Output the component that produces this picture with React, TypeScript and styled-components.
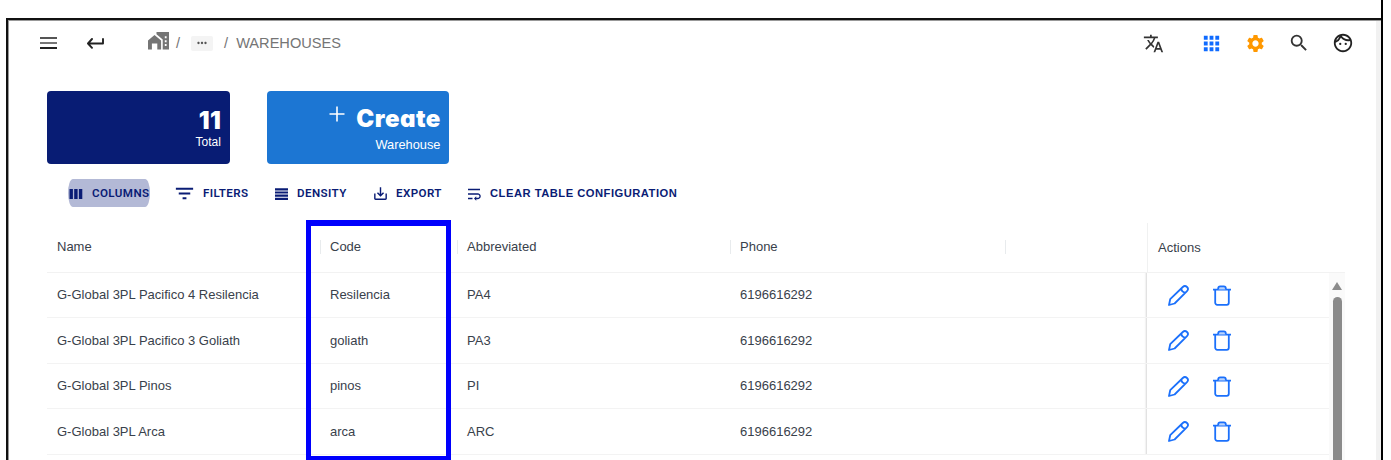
import React from 'react';
import styled, { createGlobalStyle } from 'styled-components';
import {
  MdApps, MdMoreHoriz, MdOutlineFace, MdSaveAlt, MdSearch, MdSettings,
  MdTranslate, MdWrapText, MdFilterList,
} from 'react-icons/md';

const GlobalStyle = createGlobalStyle`
  * { box-sizing: border-box; }
  body { margin: 0; background: #fff; overflow: hidden; font-family: "Liberation Sans", Arial, sans-serif; }
  svg { display: block; flex: none; }
`;

const Page = styled.div`
  width: 1383px;
  height: 460px;
  padding: 18px 0 0 6px;
  border-right: 2px solid #000;
  overflow: hidden;
`;

const Frame = styled.div`
  position: relative;
  display: flex;
  height: 442px;
  border: solid #111;
  border-width: 2px 0 0 2px;
  box-shadow: inset 1px 1px #999;
`;

const Main = styled.main`
  flex: 1;
  padding-left: 40px;
`;

const PageEdge = styled.div`
  width: 5px;
  margin-top: 1px;
  background: #f1f1f1;
`;

const TopBar = styled.header`
  display: flex;
  align-items: center;
  height: 46px;
  margin-left: -8px;
`;

const IconSlot = styled.span<{ $gap?: number; $color?: string; $up?: number }>`
  display: flex;
  margin-left: ${p => p.$gap ?? 0}px;
  margin-bottom: ${p => p.$up ?? 0}px;
  color: ${p => p.$color ?? '#333'};
`;

const Crumbs = styled.nav`
  display: flex;
  align-items: center;
  margin-left: 43px;
  font-size: 14.6px;
  line-height: 18px;
  color: #757575;
`;

const Slash = styled.span<{ $left: number; $right: number }>`
  margin: 0 ${p => p.$right}px 0 ${p => p.$left}px;
`;

const Ellipsis = styled.span`
  display: flex;
  align-items: center;
  justify-content: center;
  width: 22px;
  height: 15px;
  border-radius: 2px;
  background: #f4f4f4;
  color: #555;
`;

const Tools = styled.div`
  display: flex;
  align-items: center;
  margin-left: auto;
  margin-right: 22px;
`;

const Cards = styled.section`
  display: flex;
  gap: 37px;
  margin-top: 25px;
  margin-left: -0.6px;
`;

const Card = styled.div<{ $bg: string; $top: number }>`
  display: flex;
  flex-direction: column;
  align-items: flex-end;
  width: 182.5px;
  height: 73px;
  padding: ${p => p.$top}px 9px 0;
  border-radius: 4px;
  background: ${p => p.$bg};
  color: #fff;
`;

const CardValue = styled.div`
  display: flex;
  height: 26px;
  font: 900 24px/28px Inter, sans-serif;
  font-feature-settings: "cv11";
  letter-spacing: 0.5px;
  margin-right: -0.5px;
`;

const CardLabel = styled.div<{ $size: number; $top: number }>`
  margin-top: ${p => p.$top}px;
  font-size: ${p => p.$size}px;
  line-height: 16px;
`;

const Toolbar = styled.div`
  display: flex;
  height: 28px;
  margin: 15px 0 0 20px;
`;

const ToolButton = styled.button<{ $width: number; $active?: boolean; $sans?: boolean }>`
  display: flex;
  align-items: center;
  width: ${p => p.$width}px;
  height: 28px;
  padding: ${p => (p.$sans ? '1px' : '0')} 0 1px 1px;
  border: 0;
  border-radius: ${p => (p.$active ? '5px / 14px' : '0')};
  background: ${p => (p.$active ? '#b3b9d6' : 'transparent')};
  color: #0a1c75;
  font: ${p => (p.$sans ? '700 11.2px/16px "Liberation Sans", Arial' : '600 11.6px/16px Roboto')}, sans-serif;
  letter-spacing: ${p => (p.$sans ? 0.5 : 0.4)}px;
  white-space: nowrap;
`;

const ToolIcon = styled.span<{ $width: number; $gap: number }>`
  display: flex;
  justify-content: center;
  width: ${p => p.$width}px;
  margin-right: ${p => p.$gap}px;
  padding-top: 2px;
`;

const ToolGap = styled.span<{ $width: number }>`
  width: ${p => p.$width}px;
`;

const Table = styled.section`
  width: 1298px;
  margin-top: 13px;
  margin-left: -1px;
  font-size: 13px;
  line-height: 16px;
  color: #39414b;
`;

const columns = '273px 137px 273px 275px 142px 1fr';

const HeadRow = styled.div`
  display: grid;
  grid-template-columns: ${columns};
  align-items: center;
  height: 52.5px;
  border-bottom: 1px solid #f2f2f2;
`;

const HeadCell = styled.div<{ $line?: boolean }>`
  display: flex;
  align-items: center;
  height: 14px;
  margin-top: 2px;
  padding-left: 9px;
  border-left: 1px solid ${p => (p.$line ? '#e8ebed' : 'transparent')};
`;

const HeadActions = styled.div`
  display: flex;
  align-items: center;
  height: 49px;
  margin-top: 3px;
  padding-left: 10px;
  border-left: 1px solid #f0f1f1;
`;

const Body = styled.div`
  display: flex;
`;

const Rows = styled.div`
  flex: 1;
`;

const Row = styled.div`
  display: grid;
  grid-template-columns: ${columns};
  height: 45.5px;
  border-bottom: 1px solid #f3f3f3;
`;

const Cell = styled.div`
  display: flex;
  align-items: center;
  padding: 1px 0 0 10px;
`;

const ActionCell = styled.div`
  display: flex;
  align-items: center;
  gap: 24px;
  margin-left: -1px;
  padding: 1px 0 0 21px;
  border-left: 1px solid #e2e2e2;
  box-shadow: -1px 0 1px #f3f3f3;
`;

const ScrollTrack = styled.div`
  display: flex;
  flex-direction: column;
  align-items: center;
  width: 16px;
  padding-top: 9px;
  background: #fafafa;
`;

const ScrollThumb = styled.div`
  width: 9px;
  height: 180px;
  margin-top: 7px;
  border-radius: 5px;
  background: #8b8b8b;
`;

const Highlight = styled.div`
  position: absolute;
  left: 298px;
  top: 200px;
  width: 145px;
  height: 241px;
  border: solid #0000fd;
  border-width: 6px 5px 5px 5px;
`;

const MenuIcon = () => (
  <svg width="17" height="12" viewBox="0 0 17 12" strokeWidth="2">
    <path d="M0 1h17" stroke="#555" />
    <path d="M0 6h17" stroke="#777" />
    <path d="M0 11h17" stroke="#222" />
  </svg>
);

const ReturnIcon = () => (
  <svg width="19" height="12" viewBox="0 0 19 12" fill="none" stroke="currentColor" strokeWidth="1.9" strokeLinecap="round" strokeLinejoin="round">
    <path d="M17 2v4.500H2.200M6 2L2 6.500L6 10.800" />
  </svg>
);

const HomeIcon = () => (
  <svg width="21" height="18" viewBox="0 0 21 18" fill="currentColor">
    <path fillRule="evenodd" d="M8.500 0H21v17.500h-6.300V7.500L8.500 2.300zM16.800 4.300v2h1.800v-2zM16.800 8.200v2h1.800v-2zM16.800 12.100v2h1.800v-2z" />
    <path d="M0 8.400L6.500 3l6.600 5.400v9.100H9.300v-6H3.900v6H0z" />
  </svg>
);

const PlusIcon = () => (
  <svg width="16" height="16" viewBox="0 0 16 16" stroke="currentColor" strokeWidth="1.6">
    <path d="M.5 8h15M8 .5v15" />
  </svg>
);

const PlusSlot = styled.span`
  margin: 1px 11px 0 0;
`;

const ColumnsIcon = () => (
  <svg width="14" height="10" viewBox="0 0 14 10" fill="currentColor">
    <path d="M.5 0h3.4v10H.5zM5.2 0h3.4v10H5.2zM9.9 0h3.4v10H9.9z" />
  </svg>
);

const DensityIcon = () => (
  <svg width="13" height="12" viewBox="0 0 13 12" fill="currentColor">
    <path d="M0 .2h13v2.2H0zM0 3.4h13v2.2H0zM0 6.6h13v2.2H0zM0 9.8h13V12H0z" />
  </svg>
);

const PencilIcon = () => (
  <svg width="21" height="21" viewBox="0 0 21 21" fill="none" stroke="#1b70fb" strokeWidth="1.8" strokeLinejoin="round">
    <path d="M1 20l1.200-5.800L14.800 2a3 3 0 0 1 4.200 0a3 3 0 0 1 0 4.200L6.600 18.500zM13.300 3.500q.3 3.800 4.300 4.100" />
  </svg>
);

const TrashIcon = () => (
  <svg width="18" height="21" viewBox="0 0 18 21" fill="none" stroke="#1b70fb" strokeWidth="1.800" strokeLinejoin="round">
    <path d="M0 4.600h18M2.200 4.600v13.200a2 2 0 0 0 2 2h9.600a2 2 0 0 0 2-2V4.600" />
    <path d="M5.200 4.600V3.300q0-2 2-2h3.600q2 0 2 2v1.300" fill="#b9d3fd" />
  </svg>
);

const warehouses = [
  { name: 'G-Global 3PL Pacifico 4 Resilencia', code: 'Resilencia', short: 'PA4', phone: '6196616292' },
  { name: 'G-Global 3PL Pacifico 3 Goliath', code: 'goliath', short: 'PA3', phone: '6196616292' },
  { name: 'G-Global 3PL Pinos', code: 'pinos', short: 'PI', phone: '6196616292' },
  { name: 'G-Global 3PL Arca', code: 'arca', short: 'ARC', phone: '6196616292' },
];

export default function App() {
  return (
    <Page>
      <GlobalStyle />
      <Frame>
        <Main>
          <TopBar>
            <IconSlot><MenuIcon /></IconSlot>
            <IconSlot $gap={29} $color="#222" $up={1}><ReturnIcon /></IconSlot>
            <Crumbs>
              <IconSlot $color="#757575" $up={5}><HomeIcon /></IconSlot>
              <Slash $left={7} $right={11}>/</Slash>
              <Ellipsis><MdMoreHoriz size={14} /></Ellipsis>
              <Slash $left={11} $right={8}>/</Slash>
              WAREHOUSES
            </Crumbs>
            <Tools>
              <IconSlot><MdTranslate size={21} /></IconSlot>
              <IconSlot $gap={36} $color="#0f6bff"><MdApps size={23} /></IconSlot>
              <IconSlot $gap={22} $color="#ff9800"><MdSettings size={21} /></IconSlot>
              <IconSlot $gap={22} $up={1}><MdSearch size={22} /></IconSlot>
              <IconSlot $gap={22} $color="#222"><MdOutlineFace size={22} /></IconSlot>
            </Tools>
          </TopBar>
          <Cards>
            <Card $bg="#081c74" $top={16}>
              <CardValue>11</CardValue>
              <CardLabel $size={12} $top={1}>Total</CardLabel>
            </Card>
            <Card $bg="#1c76d3" $top={14}>
              <CardValue>
                <PlusSlot><PlusIcon /></PlusSlot>
                Create
              </CardValue>
              <CardLabel $size={12.8} $top={6}>Warehouse</CardLabel>
            </Card>
          </Cards>
          <Toolbar>
            <ToolButton $width={82} $active>
              <ToolIcon $width={14} $gap={9}><ColumnsIcon /></ToolIcon>COLUMNS
            </ToolButton>
            <ToolGap $width={24} />
            <ToolButton $width={100}>
              <ToolIcon $width={18} $gap={10}><MdFilterList size={23} /></ToolIcon>FILTERS
            </ToolButton>
            <ToolButton $width={99}>
              <ToolIcon $width={13} $gap={9}><DensityIcon /></ToolIcon>DENSITY
            </ToolButton>
            <ToolButton $width={93}>
              <ToolIcon $width={13} $gap={9}><MdSaveAlt size={17} /></ToolIcon>EXPORT
            </ToolButton>
            <ToolButton $width={220} $sans>
              <ToolIcon $width={14} $gap={9}><MdWrapText size={18} /></ToolIcon>CLEAR TABLE CONFIGURATION
            </ToolButton>
          </Toolbar>
          <Table>
            <HeadRow>
              <HeadCell>Name</HeadCell>
              <HeadCell $line>Code</HeadCell>
              <HeadCell $line>Abbreviated</HeadCell>
              <HeadCell $line>Phone</HeadCell>
              <HeadCell $line />
              <HeadActions>Actions</HeadActions>
            </HeadRow>
            <Body>
              <Rows>
                {warehouses.map(w => (
                  <Row key={w.name}>
                    <Cell>{w.name}</Cell>
                    <Cell>{w.code}</Cell>
                    <Cell>{w.short}</Cell>
                    <Cell>{w.phone}</Cell>
                    <Cell />
                    <ActionCell><PencilIcon /><TrashIcon /></ActionCell>
                  </Row>
                ))}
              </Rows>
              <ScrollTrack>
                <svg width="10" height="8" viewBox="0 0 10 8" fill="#8b8b8b"><path d="M5 0l5 8H0z" /></svg>
                <ScrollThumb />
              </ScrollTrack>
            </Body>
          </Table>
        </Main>
        <PageEdge />
        <Highlight />
      </Frame>
    </Page>
  );
}
